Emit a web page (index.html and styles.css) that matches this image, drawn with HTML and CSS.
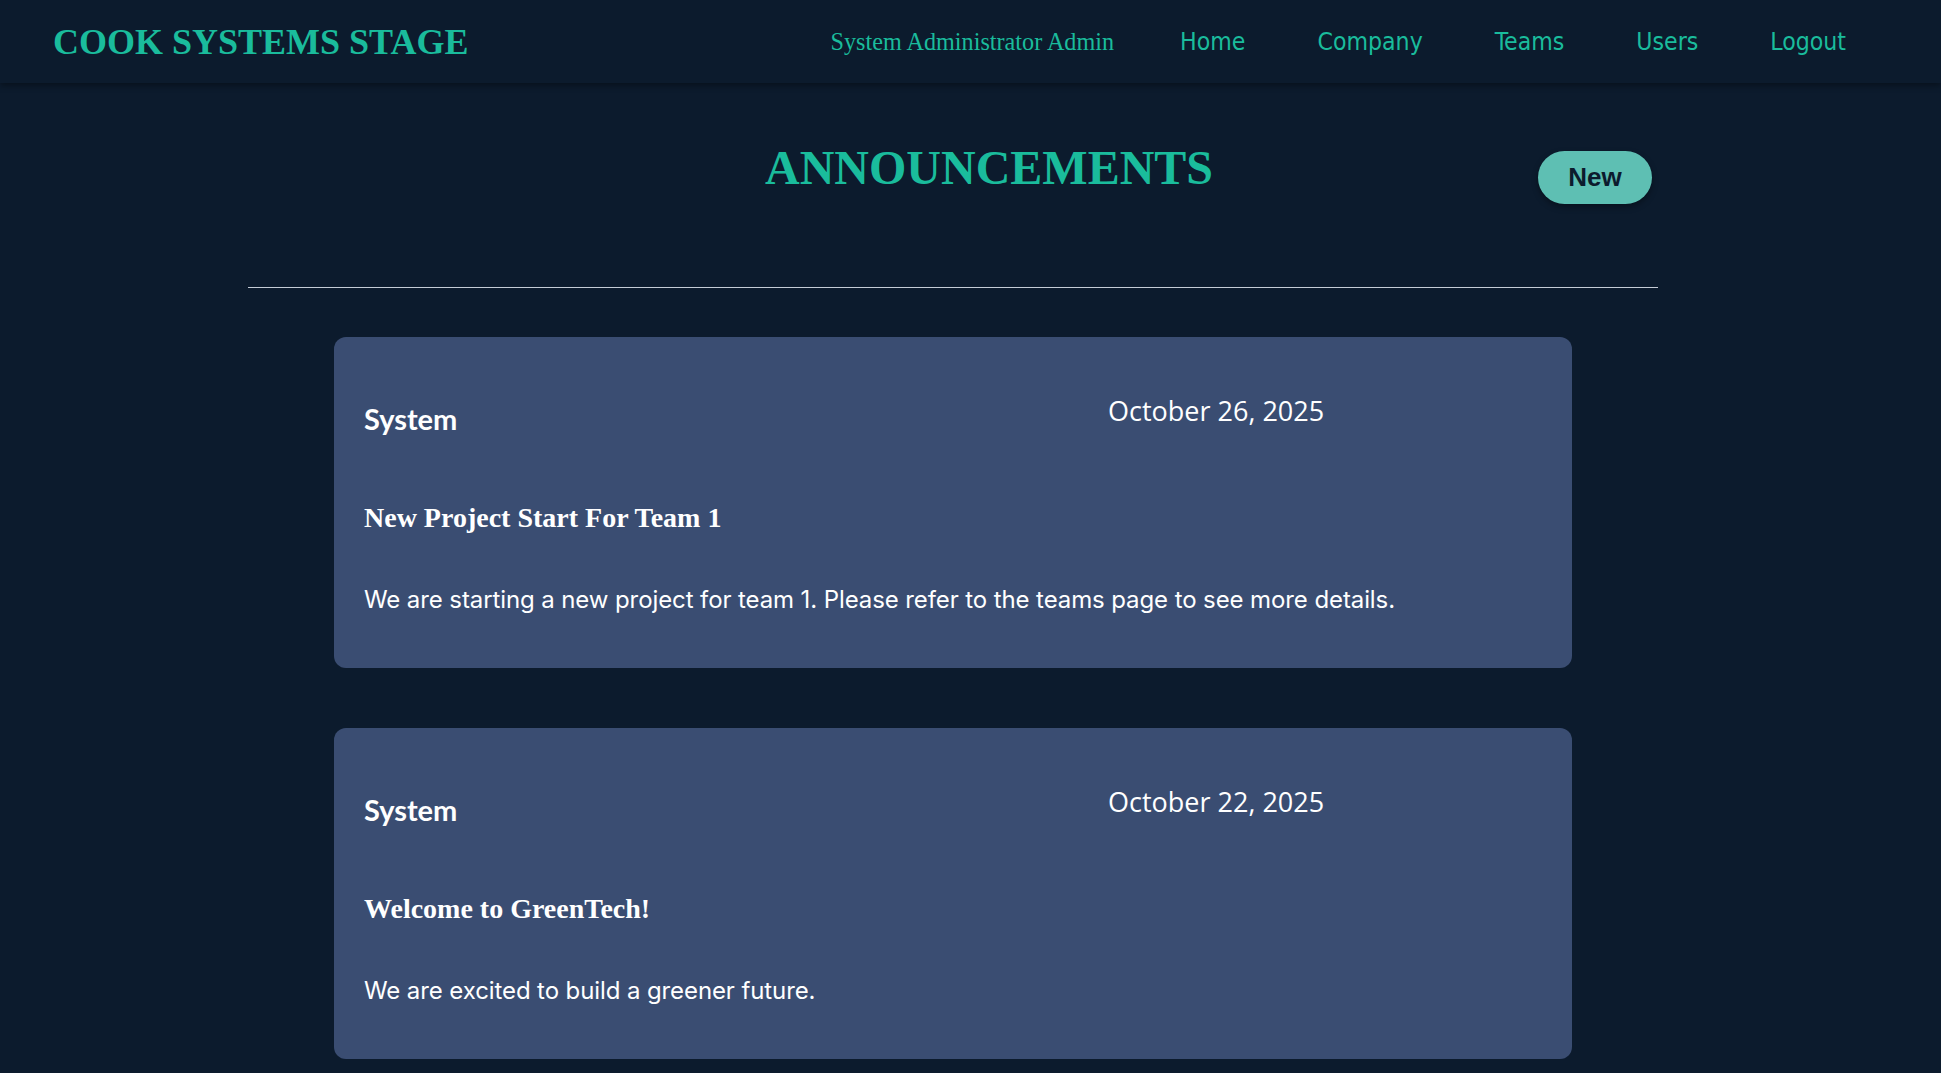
FILE: index.html
```html
<!DOCTYPE html>
<html lang="en">
<head>
<meta charset="utf-8">
<title>Announcements</title>
<link rel="stylesheet" href="styles.css">
</head>
<body>
<header class="topbar">
  <div class="logo">COOK SYSTEMS STAGE</div>
  <nav class="nav">
    <span class="nav-user">System Administrator Admin</span>
    <a class="nav-link" href="#">Home</a>
    <a class="nav-link" href="#">Company</a>
    <a class="nav-link" href="#">Teams</a>
    <a class="nav-link" href="#">Users</a>
    <a class="nav-link" href="#">Logout</a>
  </nav>
</header>
<main class="main">
  <div class="page-head">
    <h1 class="page-title">ANNOUNCEMENTS</h1>
    <button class="btn-new">New</button>
  </div>
  <hr class="divider">
  <section class="list">
    <article class="card">
      <div class="card-head">
        <h3 class="author">System</h3>
        <div class="date">October 26, 2025</div>
      </div>
      <h2 class="card-title">New Project Start For Team 1</h2>
      <p class="card-body">We are starting a new project for team 1. Please refer to the teams page to see more details.</p>
    </article>
    <article class="card">
      <div class="card-head">
        <h3 class="author">System</h3>
        <div class="date">October 22, 2025</div>
      </div>
      <h2 class="card-title">Welcome to GreenTech!</h2>
      <p class="card-body">We are excited to build a greener future.</p>
    </article>
  </section>
</main>
</body>
</html>
```
FILE: styles.css
```css
* { box-sizing: border-box; }
html, body { margin: 0; padding: 0; }
body {
  background: #0c1b2d;
  color: #ffffff;
  font-family: "Liberation Serif", serif;
  min-height: 100vh;
}
.topbar {
  height: 83px;
  display: flex;
  align-items: center;
  justify-content: space-between;
  padding: 0 95px 0 53px;
  background: #0c1b2d;
  box-shadow: 0 3px 6px rgba(0, 0, 0, 0.35);
  position: relative;
}
.logo {
  font-family: "Liberation Serif", serif;
  font-weight: bold;
  font-size: 36px;
  color: #1abc9c;
}
.nav {
  display: flex;
  align-items: center;
}
.nav-user {
  font-family: "Liberation Serif", serif;
  font-size: 24.2px;
  color: #1abc9c;
  margin-right: 30px;
}
.nav-link {
  font-family: "DejaVu Sans Condensed", "DejaVu Sans", sans-serif;
  font-stretch: condensed;
  font-size: 24.6px;
  color: #1abc9c;
  text-decoration: none;
  padding: 0 36px;
}
.nav-link:last-child { padding-right: 0; }
.main {
  width: 1410px;
  margin: 0 0 0 248px;
}
.page-head {
  display: flex;
  align-items: flex-start;
  padding-top: 57px;
}
.page-title {
  margin: 0 0 0 517px;
  font-family: "Liberation Serif", serif;
  font-weight: bold;
  font-size: 48px;
  line-height: 56px;
  color: #1abc9c;
}
.btn-new {
  margin: 11px 6px 0 auto;
  width: 114px;
  height: 53px;
  border: none;
  border-radius: 27px;
  background: #5ebfb3;
  color: #0c1b2d;
  font-family: "Liberation Sans", Arial, sans-serif;
  font-weight: bold;
  font-size: 26px;
  box-shadow: 0 3px 6px rgba(0, 0, 0, 0.35);
  cursor: pointer;
}
.divider {
  margin: 83px 0 0;
  border: none;
  border-top: 1px solid #c5ccd6;
  height: 0;
}
.list {
  display: flex;
  flex-direction: column;
  gap: 60px;
  padding: 49px 86px 40px;
}
.card {
  background: #3a4d72;
  border-radius: 12px;
  padding: 57px 30px 53px;
}
.card-head {
  display: grid;
  grid-template-columns: 744px 1fr;
  align-items: start;
}
.author {
  margin: 8px 0 0;
  font-family: Lato, "Noto Sans", sans-serif;
  font-weight: bold;
  font-size: 29px;
  line-height: 34px;
  color: #ffffff;
}
.date {
  font-family: "Open Sans", "Noto Sans", sans-serif;
  font-size: 27px;
  line-height: 34px;
  color: #ffffff;
}
.card-title {
  margin: 65px 0 0;
  font-family: "Liberation Serif", serif;
  font-weight: bold;
  font-size: 28px;
  line-height: 34px;
  color: #ffffff;
}
.card-body {
  margin: 50px 0 0;
  font-family: Inter, "Noto Sans", sans-serif;
  font-size: 24px;
  letter-spacing: -0.1px;
  line-height: 30px;
  color: #ffffff;
}
```
